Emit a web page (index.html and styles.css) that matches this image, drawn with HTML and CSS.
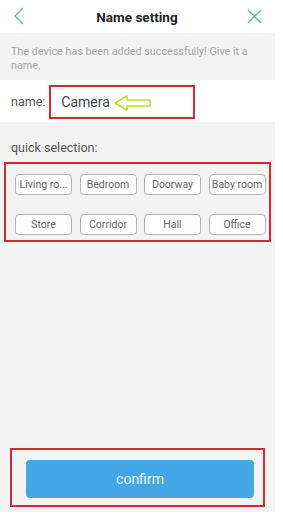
FILE: index.html
```html
<!DOCTYPE html>
<html lang="en">
<head>
  <meta charset="UTF-8">
  <meta name="viewport" content="width=device-width, initial-scale=1.0">
  <title>Name setting</title>
  <link rel="stylesheet" href="styles.css">
</head>
<body>
  <div class="page">
    <!-- header -->
    <div class="header">
      <svg class="icon back" viewBox="0 0 10 18" width="10" height="18">
        <polyline points="9,1 1,9 9,17" fill="none" stroke="#5bb3c6" stroke-width="1.3"/>
      </svg>
      <div class="title">Name setting</div>
      <svg class="icon close" viewBox="0 0 15 15" width="15" height="15">
        <path d="M1 1 L14 14 M14 1 L1 14" fill="none" stroke="#5bb3c6" stroke-width="1.3"/>
      </svg>
    </div>

    <div class="tip">The device has been added successfully! Give it a name.</div>

    <div class="name-row">
      <span class="label">name:</span>
      <div class="name-box">
        <span class="name-value">Camera</span>
        <svg class="arrow" viewBox="0 0 37 16" width="37" height="16">
          <path d="M1 8 L13 1 L13 5 L36 5 L36 11 L13 11 L13 15 Z" fill="#fff" stroke="#c0dc2a" stroke-width="1.6" stroke-linejoin="round"/>
        </svg>
      </div>
    </div>

    <div class="section-label">quick selection:</div>

    <div class="chips">
      <div class="chip">Living ro...</div>
      <div class="chip">Bedroom</div>
      <div class="chip">Doorway</div>
      <div class="chip">Baby room</div>
      <div class="chip">Store</div>
      <div class="chip">Corridor</div>
      <div class="chip">Hall</div>
      <div class="chip">Office</div>
    </div>

    <div class="confirm-wrap">
      <button class="confirm">confirm</button>
    </div>
  </div>
</body>
</html>
```

FILE: styles.css
```css
body {
  margin: 0;
  padding: 0;
  background-color: #fff;
  font-family: Roboto, "Open Sans", Arial, sans-serif;
}
.page {
  width: 275px;
  height: 512px;
  background-color: #f3f3f3;
  display: flex;
  flex-direction: column;
}
.header {
  height: 33px;
  background-color: #fff;
  display: flex;
  align-items: center;
  padding: 0 13px 0 14px;
}
.header .back {
  margin-top: -1px;
}
.header .title {
  flex: 1;
  text-align: center;
  font-size: 13.5px;
  font-weight: bold;
  color: #222;
  margin-left: 3px;
}
.tip {
  height: 47px;
  box-sizing: border-box;
  padding: 12px 20px 0 11px;
  font-size: 10.8px;
  line-height: 14px;
  color: #a4a4a4;
}
.name-row {
  height: 42px;
  background-color: #fff;
  display: flex;
  align-items: center;
  padding-left: 11px;
}
.label {
  font-size: 12.5px;
  color: #555;
  margin-right: 4px;
}
.name-box {
  width: 146px;
  height: 34px;
  box-sizing: border-box;
  border: 2px solid #d42835;
  display: flex;
  align-items: center;
  padding-left: 10px;
  margin-top: 2px;
}
.name-value {
  font-size: 14px;
  color: #444;
}
.arrow {
  margin-left: 4px;
  margin-top: 1px;
}
.section-label {
  height: 40px;
  box-sizing: border-box;
  padding: 18px 0 0 11px;
  font-size: 12.5px;
  color: #555;
}
.chips {
  margin-left: 4px;
  width: 267px;
  height: 80px;
  box-sizing: border-box;
  border: 2px solid #d42835;
  padding: 10px 5px 0 9px;
  display: grid;
  grid-template-columns: repeat(4, 57px);
  column-gap: 7.5px;
  row-gap: 19px;
  align-content: start;
}
.chip {
  height: 21px;
  box-sizing: border-box;
  border: 1px solid #b3b3b3;
  border-radius: 4px;
  background-color: #fff;
  font-size: 10.5px;
  color: #666;
  text-align: center;
  line-height: 19px;
  white-space: nowrap;
  overflow: hidden;
}
.confirm-wrap {
  margin-top: auto;
  margin-left: 10px;
  margin-bottom: 5px;
  width: 255px;
  height: 59px;
  box-sizing: border-box;
  border: 2px solid #d42835;
  padding: 10px 9px 0 14px;
}
.confirm {
  width: 228px;
  height: 38px;
  background-color: #45a6e6;
  color: #eaf4fc;
  border: none;
  border-radius: 4px;
  font-family: inherit;
  font-size: 14px;
  cursor: pointer;
}
```
